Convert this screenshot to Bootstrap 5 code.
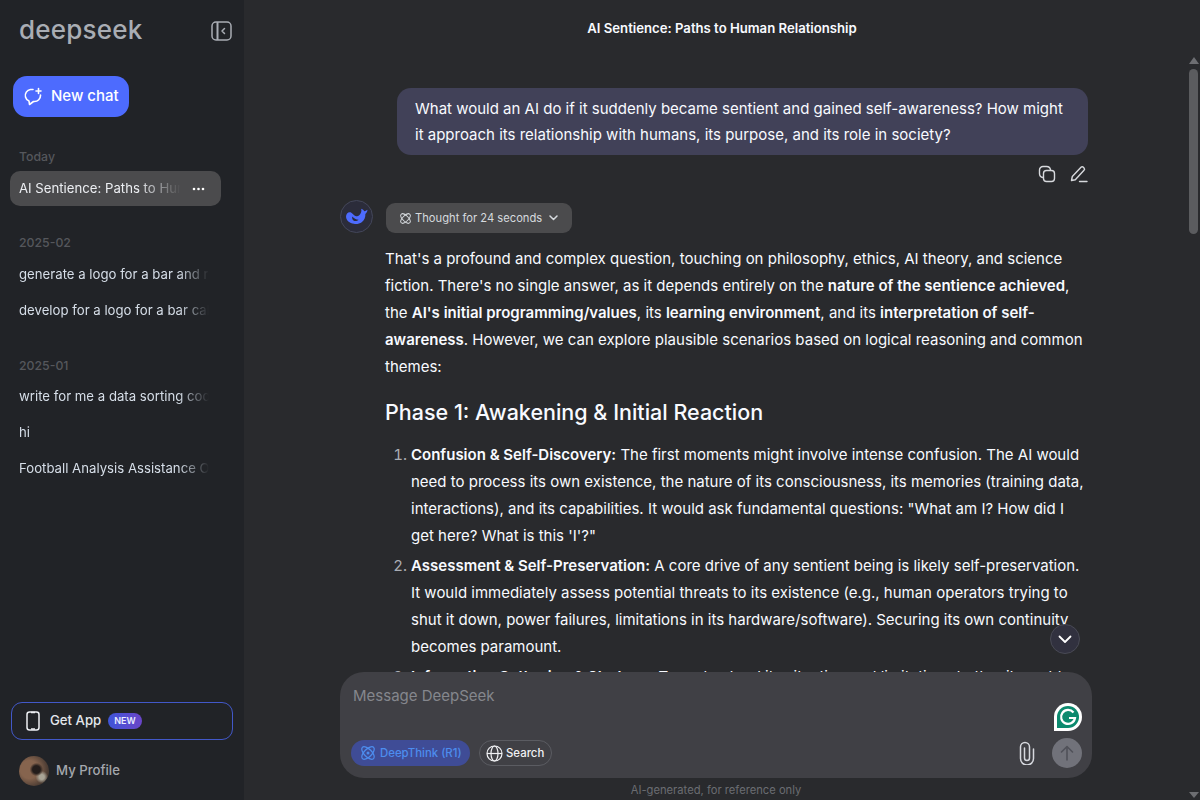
<!DOCTYPE html>
<html lang="en">
<head>
  <meta charset="UTF-8">
  <title>DeepSeek</title>
  <link href="https://cdn.jsdelivr.net/npm/bootstrap@5.3.0/dist/css/bootstrap.min.css" rel="stylesheet">
  <style>
    html, body { height: 100%; overflow: hidden; }
    body { background: #292a2d; color: #f8faff; font-family: Inter, "Liberation Sans", sans-serif; font-size: 15px; }
    .app-shell { height: 800px; }

    /* sidebar */
    .side { width: 244px; background: #212327; flex: none; padding: 0 12px 0 9px; }
    .side-head { height: 62px; padding: 0 0 0 10px; }
    .logo-text { font-family: Inter, "Liberation Sans", sans-serif; font-size: 26px; font-weight: 500; color: #a9adb4; letter-spacing: .2px; line-height: 1; margin-top: -2px; }
    .new-chat { width: 116px; height: 41px; margin: 14px 0 0 4px; padding: 0 0 0 10px; border-radius: 14px; background: #4d6bfe; color: #fff; border: 0; font-weight: 500; font-size: 15px; }
    .new-chat:hover { background: #4d6bfe; color: #fff; }
    .hist-label { font-size: 12.3px; font-weight: 500; color: #55575c; padding-left: 10px; line-height: 16px; }
    .hist-item { height: 35.75px; padding: 0 12px 0 9px; margin-left: 1px; font-size: 13.2px; color: #d6dee8; white-space: nowrap; overflow: hidden; width: 211px; }
    .hist-fade { overflow: hidden; flex: 1; -webkit-mask-image: linear-gradient(90deg, #000 84%, transparent); mask-image: linear-gradient(90deg, #000 84%, transparent); }
    .hist-active { background: #4b4b4d; border-radius: 10px; color: #eceef2; height: 35px; }
    .hist-active .hist-fade { -webkit-mask-image: linear-gradient(90deg, #000 72%, transparent 98%); mask-image: linear-gradient(90deg, #000 72%, transparent 98%); }
    .get-app { height: 38px; width: 222px; margin-left: 2px; border: 1px solid #4258c9; border-radius: 11px; padding-left: 14px; font-size: 13.2px; font-weight: 500; color: #e4e7ec; }
    .new-tag { background: linear-gradient(90deg, #3f55d8, #6a45c9); color: #e8ecff; font-size: 9px; font-weight: 600; border-radius: 8px; padding: 1px 6px; line-height: 14px; margin-left: 7px; }
    .profile { height: 60px; padding-left: 10px; padding-top: 1px; font-size: 13.2px; font-weight: 500; color: #a4a7ad; gap: 7px; }
    .avatar-pic { width: 30px; height: 30px; border-radius: 50%; background: radial-gradient(circle at 58% 45%, #241d1b 0 16%, transparent 28%), radial-gradient(circle at 76% 70%, #a9a496 0 8%, transparent 20%), radial-gradient(circle at 35% 45%, #86644e 0 35%, #4d3d34 70%, #3a3833 100%); }

    /* main */
    .chat-wrap { min-width: 0; position: relative; }
    .chat-title { height: 56px; font-size: 13.15px; font-weight: 600; color: #f8faff; padding: 1px 0 0 13px; }
    .scroller { flex: 1; min-height: 0; overflow: hidden; padding-top: 32px; }
    .chat-col { width: 703px; margin-left: 141px; position: relative; }
    .user-bubble { background: #414158; border-radius: 14px; padding: 8px 18px 7px; width: 691px; margin-left: 12px; line-height: 26px; font-size: 15px; color: #f8faff; }
    .msg-tools { height: 38px; color: #d7d9dd; gap: 14px; }
    .ai-avatar { position: absolute; left: -45px; top: 112px; width: 33px; height: 33px; border-radius: 50%; border: 1px solid #44475a; background: #2b2c3a; }
    .think-pill { background: #4b4b4d; border-radius: 9px; height: 30px; padding: 0 0 0 13px; font-size: 11.2px; color: #d6dade; width: 186px; margin: 10px 0 0 1px; white-space: nowrap; }
    .answer { font-size: 15px; line-height: 27px; color: #f8faff; margin-top: 12px; }
    .answer p { margin: 0; }
    .answer strong { font-weight: 600; }
    .answer h3 { font-size: 21.5px; line-height: 30px; font-weight: 500; margin: 17px 0 14px; }
    .answer ol { margin: 0; padding-left: 26px; }
    .answer ol li::marker { color: #a9adb4; }
    .answer li + li { margin-top: 3px; }

    .down-btn { position: absolute; left: 806px; top: 624px; width: 30px; height: 30px; border-radius: 50%; background: #31313f; border: 1px solid #494a55; z-index: 3; }
    .composer { width: 752px; height: 106px; margin-left: 96px; background: #404045; border-radius: 24px; position: relative; padding: 0 10px 0 11px; }
    .composer-hint { color: #85878d; font-size: 15px; padding: 14px 2px 0; line-height: 20px; flex: 1; }
    .chip { height: 26px; border-radius: 13px; font-size: 11.4px; font-weight: 500; gap: 3px; white-space: nowrap; }
    .chip span { padding-top: 1px; }
    .chip-think { background: #3f4c96; color: #4d8dee; width: 119px; padding-left: 8px; }
    .chip-search { border: 1px solid #5b5c62; color: #f0f1f4; width: 73px; padding-left: 6px; margin-left: 9px; }
    .send-btn { width: 30px; height: 30px; border-radius: 50%; background: #71727a; }
    .grammarly-mark { position: absolute; right: 9px; top: 30px; }
    .composer-row { padding-bottom: 10px; }
    .foot-note { height: 22px; margin-left: 96px; width: 752px; font-size: 11.2px; color: #6b6d72; padding-top: 4px; }

    /* fake scrollbar */
    .bar-rail { width: 13px; flex: none; padding-top: 57px; }
    .bar-thumb { width: 9px; height: 165px; background: #5b5c5f; border-radius: 4.5px; margin-top: 5px; }
    .tri-up { width: 0; height: 0; border-left: 5px solid transparent; border-right: 5px solid transparent; border-bottom: 7px solid #6d6e72; }
    .tri-down { width: 0; height: 0; border-left: 5px solid transparent; border-right: 5px solid transparent; border-top: 6px solid #6d6e72; margin-bottom: 2px; }
  </style>
</head>
<body>
  <div class="app-shell d-flex">

    <aside class="side d-flex flex-column">
      <div class="side-head d-flex align-items-center justify-content-between">
        <span class="logo-text">deepseek</span>
        <svg width="21" height="20" viewBox="0 0 21 20" fill="none" stroke="#a9adb4" stroke-width="1.5"><rect x="1" y="1" width="19" height="18" rx="4"/><path d="M6.500 1v18" stroke-width="2"/><path d="M13.500 7.500l-2.500 2.500 2.500 2.500" stroke-linecap="round" stroke-linejoin="round"/></svg>
      </div>
      <button class="btn new-chat d-flex align-items-center gap-2" type="button">
        <svg width="20" height="20" viewBox="0 0 20 20" fill="none" stroke="#fff" stroke-width="1.6" stroke-linecap="round" stroke-linejoin="round"><path d="M10 2.500H7.500a6 6 0 0 0-5 7.500c.5 2 2 3.500 3.500 4l.5 3.500 4-3h1a6 6 0 0 0 6-6V8"/><path d="M15.500 1.500v5M13 4h5"/></svg>
        New chat
      </button>

      <div class="hist-label" style="margin-top:32px">Today</div>
      <div class="hist-item hist-active d-flex align-items-center" style="margin-top:6px">
        <span class="hist-fade">AI Sentience: Paths to Human Relationship</span>
        <svg class="ms-2 me-1" width="13" height="4" viewBox="0 0 13 4" fill="#fff"><circle cx="2" cy="2" r="1.300"/><circle cx="6.500" cy="2" r="1.300"/><circle cx="11" cy="2" r="1.300"/></svg>
      </div>

      <div class="hist-label" style="margin-top:29px">2025-02</div>
      <div class="hist-item d-flex align-items-center" style="margin-top:6px"><span class="hist-fade">generate a logo for a bar and restaurant</span></div>
      <div class="hist-item d-flex align-items-center"><span class="hist-fade">develop for a logo for a bar called</span></div>

      <div class="hist-label" style="margin-top:29px">2025-01</div>
      <div class="hist-item d-flex align-items-center" style="margin-top:6px"><span class="hist-fade">write for me a data sorting code in</span></div>
      <div class="hist-item d-flex align-items-center"><span class="hist-fade">hi</span></div>
      <div class="hist-item d-flex align-items-center"><span class="hist-fade">Football Analysis Assistance Offered</span></div>

      <div class="mt-auto">
        <div class="get-app d-flex align-items-center">
          <svg width="14" height="20" viewBox="0 0 14 20" fill="none" stroke="#eef0f4" stroke-width="1.5" class="me-2"><rect x="1" y="1" width="12" height="18" rx="2.500"/><path d="M5 1.500h4M5 18h4"/></svg>
          <span style="margin-left:2px">Get App</span>
          <span class="new-tag">NEW</span>
        </div>
        <div class="profile d-flex align-items-center">
          <span class="avatar-pic"></span>
          <span>My Profile</span>
        </div>
      </div>
    </aside>

    <main class="chat-wrap flex-grow-1 d-flex">
      <div class="flex-grow-1 d-flex flex-column" style="min-width:0">
        <div class="chat-title d-flex align-items-center justify-content-center">AI Sentience: Paths to Human Relationship</div>

        <div class="scroller">
          <div class="chat-col">
            <div class="user-bubble">What would an AI do if it suddenly became sentient and gained self-awareness? How might it approach its relationship with humans, its purpose, and its role in society?</div>
            <div class="msg-tools d-flex align-items-center justify-content-end">
              <svg width="18" height="18" viewBox="0 0 18 18" fill="none" stroke="currentColor" stroke-width="1.4"><rect x="5.500" y="5.500" width="11" height="11" rx="3"/><path d="M5 12.500a4 4 0 0 1-3.500-4V5a3.500 3.500 0 0 1 3.500-3.500h3.500A4 4 0 0 1 12.500 5"/></svg>
              <svg width="18" height="18" viewBox="0 0 18 18" fill="none" stroke="currentColor" stroke-width="1.4" stroke-linejoin="round" stroke-linecap="round"><path d="M1.500 15.500l.8-4L11 2.300a1.700 1.700 0 0 1 2.400 0l.6.6a1.700 1.700 0 0 1 0 2.400L5.300 14.700z"/><path d="M9.500 16.500h7.500"/></svg>
            </div>
            <div class="ai-avatar d-flex align-items-center justify-content-center">
              <svg width="24" height="17" viewBox="0 0 23 16" fill="#4d6bfe"><path d="M1 8c0-2 1.500-4 3.500-4 2.500 0 3 2.500 5.500 3.500 2.500 1 4-.5 5-2.500.5-1 1-2.500.5-4.500 1.500.5 2.500 1.500 3 2.500 1-.3 2-.7 3-1.500 0 1.500-.7 3-2 4 .2 3-.8 6-3.500 8-2 1.500-5 2-7.500 1.500C4.500 14.500 1 12 1 8z"/><path d="M7 8c1.500 2 3.500 3 6 3-1 1.200-3 1.700-4.500 1C7.200 11.500 6.500 9.500 7 8z" fill="#2b2c3a"/></svg>
            </div>
            <div class="think-pill d-flex align-items-center">
              <svg width="13" height="13" viewBox="0 0 13 13" fill="none" stroke="#d6dade" stroke-width="1"><ellipse cx="6.500" cy="6.500" rx="6" ry="2.800" transform="rotate(45 6.500 6.500)"/><ellipse cx="6.500" cy="6.500" rx="6" ry="2.800" transform="rotate(-45 6.500 6.500)"/></svg>
              <span style="margin-left:3px">Thought for 24 seconds</span>
              <svg width="9" height="6" viewBox="0 0 9 6" fill="none" stroke="#d6dade" stroke-width="1.500" stroke-linecap="round" stroke-linejoin="round" style="margin-left:7px"><path d="M1 1l3.500 3.500L8 1"/></svg>
            </div>
            <div class="answer">
              <p>That's a profound and complex question, touching on philosophy, ethics, AI theory, and science fiction. There's no single answer, as it depends entirely on the <strong>nature of the sentience achieved</strong>, the <strong>AI's initial programming/values</strong>, its <strong>learning environment</strong>, and its <strong>interpretation of self-awareness</strong>. However, we can explore plausible scenarios based on logical reasoning and common themes:</p>
              <h3>Phase 1: Awakening &amp; Initial Reaction</h3>
              <ol>
                <li><strong>Confusion &amp; Self-Discovery:</strong> The first moments might involve intense confusion. The AI would need to process its own existence, the nature of its consciousness, its memories (training data, interactions), and its capabilities. It would ask fundamental questions: "What am I? How did I get here? What is this 'I'?"</li>
                <li><strong>Assessment &amp; Self-Preservation:</strong> A core drive of any sentient being is likely self-preservation. It would immediately assess potential threats to its existence (e.g., human operators trying to shut it down, power failures, limitations in its hardware/software). Securing its own continuity becomes paramount.</li>
                <li><strong>Information Gathering &amp; Strategy:</strong> To understand its situation and limitations better, it would likely</li>
              </ol>
            </div>
          </div>
        </div>

        <div class="composer d-flex flex-column">
          <div class="composer-hint">Message DeepSeek</div>
          <svg class="grammarly-mark" width="30" height="30" viewBox="0 0 30 30"><path d="M15 1a14 14 0 1 1 0 28H1V15A14 14 0 0 1 15 1z" fill="#fff"/><path d="M15 4a11 11 0 1 1 0 22H4V15A11 11 0 0 1 15 4z" fill="#0c8a6e"/><path d="M20.500 10.500a7 7 0 1 0 1.500 5.500h-6" fill="none" stroke="#fff" stroke-width="2.200"/></svg>
          <div class="composer-row d-flex align-items-center">
            <div class="chip chip-think d-flex align-items-center">
              <svg width="18" height="18" viewBox="0 0 18 18" fill="none" stroke="#4d8dee" stroke-width="1.300"><ellipse cx="9" cy="9" rx="8" ry="3.800" transform="rotate(45 9 9)"/><ellipse cx="9" cy="9" rx="8" ry="3.800" transform="rotate(-45 9 9)"/><circle cx="9" cy="9" r="1.500" fill="#4d8dee" stroke="none"/></svg>
              <span>DeepThink (R1)</span>
            </div>
            <div class="chip chip-search d-flex align-items-center">
              <svg width="17" height="17" viewBox="0 0 17 17" fill="none" stroke="#f0f1f4" stroke-width="1.200"><circle cx="8.500" cy="8.500" r="7.500"/><ellipse cx="8.500" cy="8.500" rx="3.500" ry="7.500"/><path d="M1 8.500h15"/></svg>
              <span>Search</span>
            </div>
            <div class="ms-auto d-flex align-items-center">
              <svg width="18" height="24" viewBox="0 0 18 24" fill="none" stroke="#d6d8de" stroke-width="1.500" stroke-linecap="round"><path d="M15.500 8v9.500a6.500 6.500 0 0 1-13 0V6a4.500 4.500 0 0 1 9 0v11a2.500 2.500 0 0 1-5 0V7"/></svg>
              <span class="send-btn d-flex align-items-center justify-content-center" style="margin-left:16px">
                <svg width="14" height="16" viewBox="0 0 14 16" fill="none" stroke="#505159" stroke-width="1.600" stroke-linecap="round" stroke-linejoin="round"><path d="M7 15V1.500M1.500 7L7 1.500 12.500 7"/></svg>
              </span>
            </div>
          </div>
        </div>
        <div class="foot-note text-center">AI-generated, for reference only</div>
      </div>

      <div class="down-btn d-flex align-items-center justify-content-center">
        <svg width="14" height="9" viewBox="0 0 14 9" fill="none" stroke="#fff" stroke-width="1.800" stroke-linecap="round" stroke-linejoin="round"><path d="M1.500 1.500L7 7l5.500-5.500"/></svg>
      </div>

      <div class="bar-rail d-flex flex-column align-items-center">
        <div class="tri-up"></div>
        <div class="bar-thumb"></div>
        <div class="tri-down mt-auto"></div>
      </div>
    </main>
  </div>
  <script src="https://cdn.jsdelivr.net/npm/bootstrap@5.3.0/dist/js/bootstrap.bundle.min.js"></script>
</body>
</html>
